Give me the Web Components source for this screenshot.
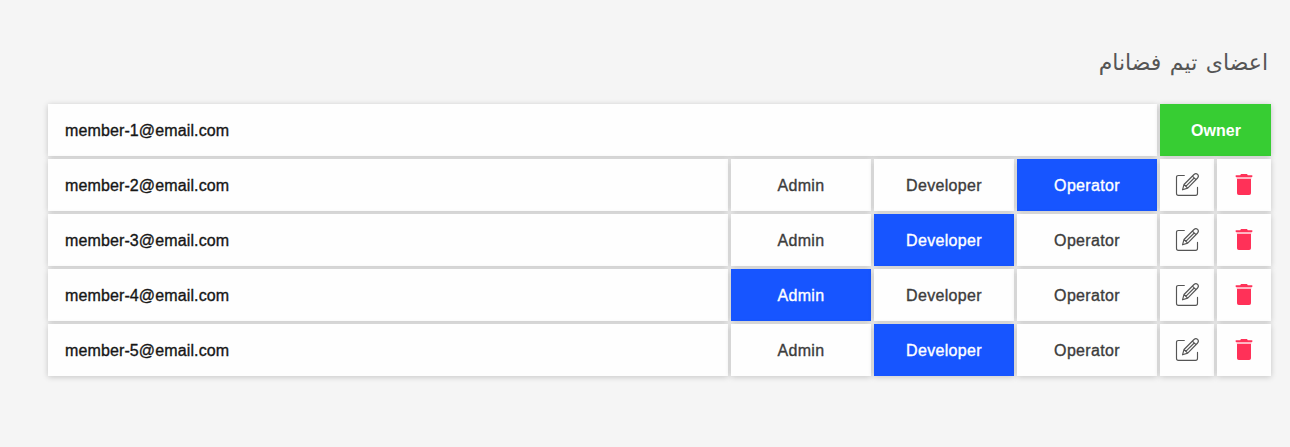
<!DOCTYPE html>
<html lang="fa">
<head>
<meta charset="utf-8">
<title>Team members</title>
<style>
body{margin:0;background:#f5f5f5;font-family:"Liberation Sans",Arial,sans-serif;font-size:16px}
</style>
</head>
<body>
<team-panel heading="اعضای تیم فضانام">
  <member-row email="member-1@email.com" role="Owner"></member-row>
  <member-row email="member-2@email.com" role="Operator"></member-row>
  <member-row email="member-3@email.com" role="Developer"></member-row>
  <member-row email="member-4@email.com" role="Admin"></member-row>
  <member-row email="member-5@email.com" role="Developer"></member-row>
</team-panel>
<script>
class TeamPanel extends HTMLElement{
  connectedCallback(){
    this.attachShadow({mode:'open'}).innerHTML=`<style>
      :host{display:block;box-sizing:border-box;height:447px;padding:45px 19px 0 48px}
      h1{margin:0 3px 23px 0;height:36px;font:400 22px/36px "DejaVu Sans",sans-serif;color:#555;text-align:right;direction:rtl;word-spacing:1.5px}
      .rows{display:grid;gap:3px}
    </style><h1>${this.getAttribute('heading')}</h1><div class="rows"><slot></slot></div>`;
  }
}
class TableCell extends HTMLElement{
  connectedCallback(){
    this.attachShadow({mode:'open'}).innerHTML=`<style>
      :host{display:flex;box-sizing:border-box;height:52px;padding-top:1px;align-items:center;justify-content:center;background:#fefefe;color:#3c3c3c;box-shadow:0 1px 6px rgba(0,0,0,.2);-webkit-text-stroke:.35px currentColor;line-height:21px;letter-spacing:.33px;white-space:nowrap}
      :host([kind=email]){justify-content:flex-start;padding-left:17px;color:#161616;letter-spacing:.12px}
      :host([kind=active]){background:#1755ff;color:#fff}
      :host([kind=owner]){background:#37cd33;color:#fff;font-weight:700;-webkit-text-stroke:0;letter-spacing:.05px;padding-left:1px}
      :host([kind=icon]){padding-top:0}
    </style><slot></slot>`;
  }
}
class EditIcon extends HTMLElement{
  connectedCallback(){
    this.attachShadow({mode:'open'}).innerHTML=`<style>:host,svg{display:block}</style>
    <svg width="24" height="24" viewBox="0 0 24 24" fill="none" stroke="#555" stroke-width="1.15" stroke-linecap="round" stroke-linejoin="round" overflow="visible">
      <path d="M9.3 2.5H3.4Q1.5 2.5 1.5 4.4V20.3Q1.5 22.4 3.4 22.4H20.6Q22.5 22.4 22.5 20.3V14.4"/>
      <path d="M7.5 16.8L9 11.5L19 1.5Q20.9 -.2 22.6 1.4Q24.2 3.1 22.6 5L12.7 15.1ZM9 11.5L12.7 15.1M17.4 3.1L21 6.7M10.8 13.3L19.2 5"/>
    </svg>`;
  }
}
class TrashIcon extends HTMLElement{
  connectedCallback(){
    this.attachShadow({mode:'open'}).innerHTML=`<style>:host,svg{display:block}</style>
    <svg width="18" height="22" viewBox="0 0 18 22">
      <path fill="#ff3158" d="M.7 1.2H5.2L6 0H12L12.8 1.2H17.3V3H.7ZM2 4.8H16V19.2Q16 21 14.2 21H3.8Q2 21 2 19.2Z"/>
      <path fill="#ffb3c1" d="M1.3 3H16.7V4L16 4.8H2L1.3 4Z"/>
    </svg>`;
  }
}
class MemberRow extends HTMLElement{
  connectedCallback(){
    const role=this.getAttribute('role'), owner=role==='Owner';
    const cells=owner?'<table-cell kind="owner">Owner</table-cell>'
      :['Admin','Developer','Operator'].map(r=>`<table-cell kind="${r===role?'active':'role'}"><span>${r}</span></table-cell>`).join('')
        +'<table-cell kind="icon"><edit-icon></edit-icon></table-cell><table-cell kind="icon"><trash-icon></trash-icon></table-cell>';
    this.attachShadow({mode:'open'}).innerHTML=`<style>
      :host{display:grid;gap:3px;grid-template-columns:${owner?'1fr 111px':'1fr 140px 140px 140px 54px 54px'}}
    </style><table-cell kind="email"><span>${this.getAttribute('email')}</span></table-cell>${cells}`;
  }
}
customElements.define('team-panel',TeamPanel);
customElements.define('table-cell',TableCell);
customElements.define('edit-icon',EditIcon);
customElements.define('trash-icon',TrashIcon);
customElements.define('member-row',MemberRow);
</script>
</body>
</html>
